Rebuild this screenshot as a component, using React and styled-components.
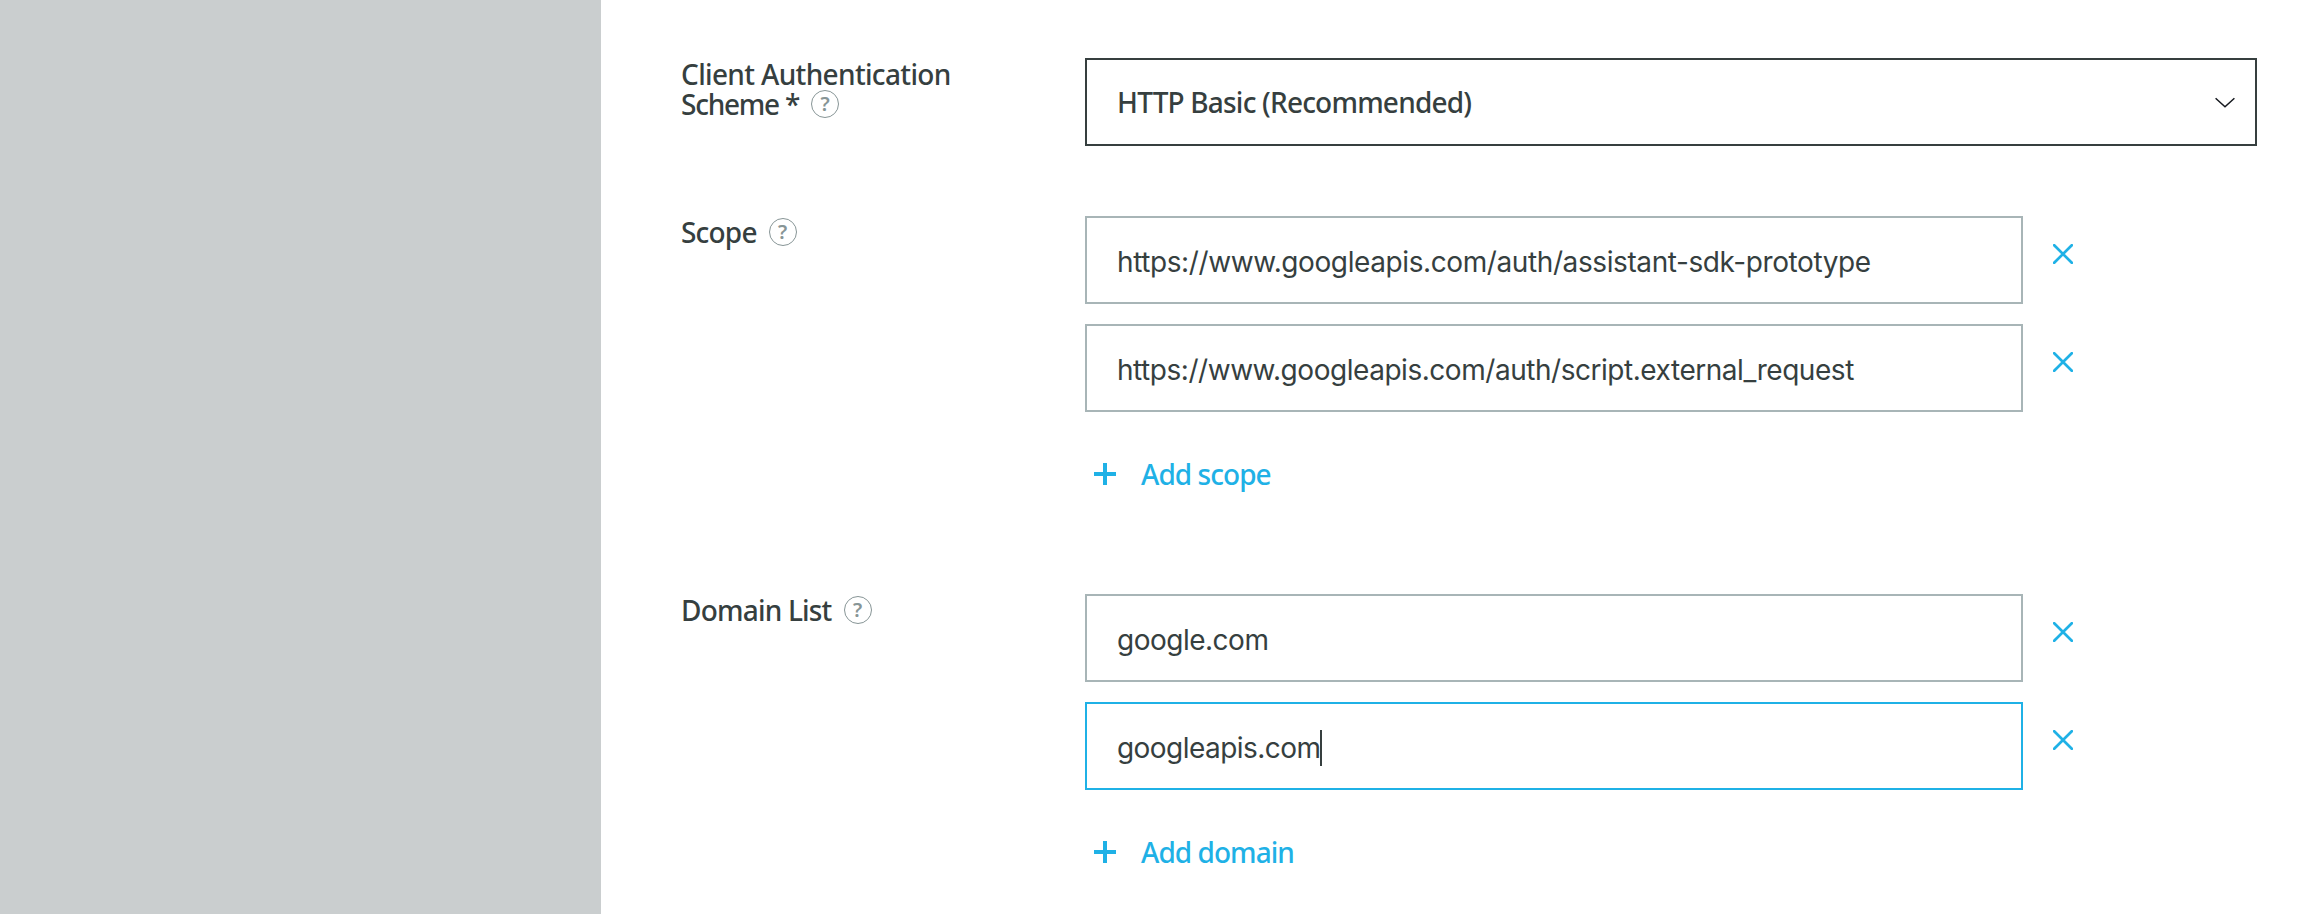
import React from "react";
import styled, { createGlobalStyle } from "styled-components";

const GlobalStyle = createGlobalStyle`
  *, *::before, *::after { box-sizing: border-box; }
  body { margin: 0; background: #fff; }
`;

const Page = styled.div`
  display: flex;
  height: 914px;
  overflow: hidden;
  color: #363f3f;
  font-family: "Noto Sans", "Open Sans", sans-serif;
  font-size: 28px;
  font-weight: 500;
`;

const Sidebar = styled.aside`
  flex: 0 0 601px;
  background: #cacecf;
`;

const Form = styled.main`
  flex: 1;
  display: flex;
  flex-direction: column;
  padding: 58px 60px 0 80px;
`;

const Field = styled.section`
  display: grid;
  grid-template-columns: 404px 1fr;
  height: ${(p) => p.$height}px;
  flex: none;
`;

const Label = styled.div`
  padding-top: 1px;
  line-height: 30px;
  white-space: nowrap;
`;

const LabelLine = styled.div`
  display: flex;
  align-items: center;
  height: 30px;
  gap: 12px;
`;

const Words = styled.span`
  letter-spacing: ${(p) => p.$spacing || 0}px;
  white-space: nowrap;
`;

const HelpIcon = styled.span`
  display: inline-flex;
  align-items: center;
  justify-content: center;
  width: 28px;
  height: 28px;
  border: 1.5px solid #879596;
  border-radius: 50%;
  color: #879596;
  font-size: 20px;
  font-weight: 600;
  line-height: 26px;
`;

const Select = styled.div`
  display: flex;
  align-items: center;
  justify-content: space-between;
  height: 88px;
  width: 1172px;
  padding: 0 20px 0 30px;
  border: 2px solid #363f3f;
`;

const Controls = styled.div`
  display: flex;
  flex-direction: column;
  gap: 20px;
`;

const InputRow = styled.div`
  display: flex;
  gap: 30px;
`;

const Input = styled.div`
  display: flex;
  align-items: center;
  width: 938px;
  height: 88px;
  padding: 3px 30px 0;
  border: 2px solid ${(p) => (p.$focused ? "#1fb1e6" : "#a8b5b7")};
  font-family: Inter, "Liberation Sans", sans-serif;
  font-weight: 430;
`;

const Caret = styled.span`
  width: 2px;
  height: 36px;
  background: #363f3f;
`;

const RemoveButton = styled.button`
  display: flex;
  width: 20px;
  height: 20px;
  margin-top: 28px;
  padding: 0;
  border: 0;
  background: none;
`;

const AddButton = styled.button`
  display: flex;
  align-items: center;
  gap: 25px;
  align-self: flex-start;
  height: 40px;
  margin-top: 22px;
  padding: 0 0 0 9px;
  border: 0;
  background: none;
  color: #1fb1e6;
  font: inherit;
`;

const Help = () => <HelpIcon>?</HelpIcon>;

const Cross = () => (
  <svg width="20" height="20" viewBox="0 0 20 20" fill="none" stroke="#1fb1e6" strokeWidth="2.7" strokeLinecap="round">
    <path d="M1.2 1.2 18.8 18.8M18.8 1.2 1.2 18.8" />
  </svg>
);

const Plus = () => (
  <svg width="22" height="22" viewBox="0 0 22 22" fill="none" stroke="#1fb1e6" strokeWidth="4">
    <path d="M11 0v22M0 11h22" />
  </svg>
);

const Chevron = () => (
  <svg width="20" height="12" viewBox="0 0 20 12" fill="none" stroke="#16191f" strokeWidth="1.5">
    <path d="M0.6 2.2 10 10.8 19.4 2.2" />
  </svg>
);

function EntryList({ entries, focused, addLabel }) {
  return (
    <Controls>
      {entries.map((entry, i) => (
        <InputRow key={entry.text}>
          <Input $focused={focused === i}>
            <Words $spacing={entry.spacing}>{entry.text}</Words>
            {focused === i && <Caret />}
          </Input>
          <RemoveButton aria-label="Remove">
            <Cross />
          </RemoveButton>
        </InputRow>
      ))}
      <AddButton>
        <Plus />
        <Words $spacing={-0.95}>{addLabel}</Words>
      </AddButton>
    </Controls>
  );
}

const scopes = [
  { text: "https://www.googleapis.com/auth/assistant-sdk-prototype", spacing: -0.4 },
  { text: "https://www.googleapis.com/auth/script.external_request", spacing: -0.46 },
];

const domains = [
  { text: "google.com", spacing: -0.5 },
  { text: "googleapis.com", spacing: -0.55 },
];

export default function App() {
  return (
    <Page>
      <GlobalStyle />
      <Sidebar />
      <Form>
        <Field $height={158}>
          <Label>
            <LabelLine>
              <Words $spacing={-0.65}>Client Authentication</Words>
            </LabelLine>
            <LabelLine>
              <Words $spacing={-1.25}>Scheme *</Words>
              <Help />
            </LabelLine>
          </Label>
          <Select>
            <Words $spacing={-0.8}>HTTP Basic (Recommended)</Words>
            <Chevron />
          </Select>
        </Field>
        <Field $height={378}>
          <Label>
            <LabelLine>
              <Words $spacing={-0.8}>Scope</Words>
              <Help />
            </LabelLine>
          </Label>
          <EntryList entries={scopes} addLabel="Add scope" />
        </Field>
        <Field $height={320}>
          <Label>
            <LabelLine>
              <Words $spacing={-0.8}>Domain List</Words>
              <Help />
            </LabelLine>
          </Label>
          <EntryList entries={domains} focused={1} addLabel="Add domain" />
        </Field>
      </Form>
    </Page>
  );
}
